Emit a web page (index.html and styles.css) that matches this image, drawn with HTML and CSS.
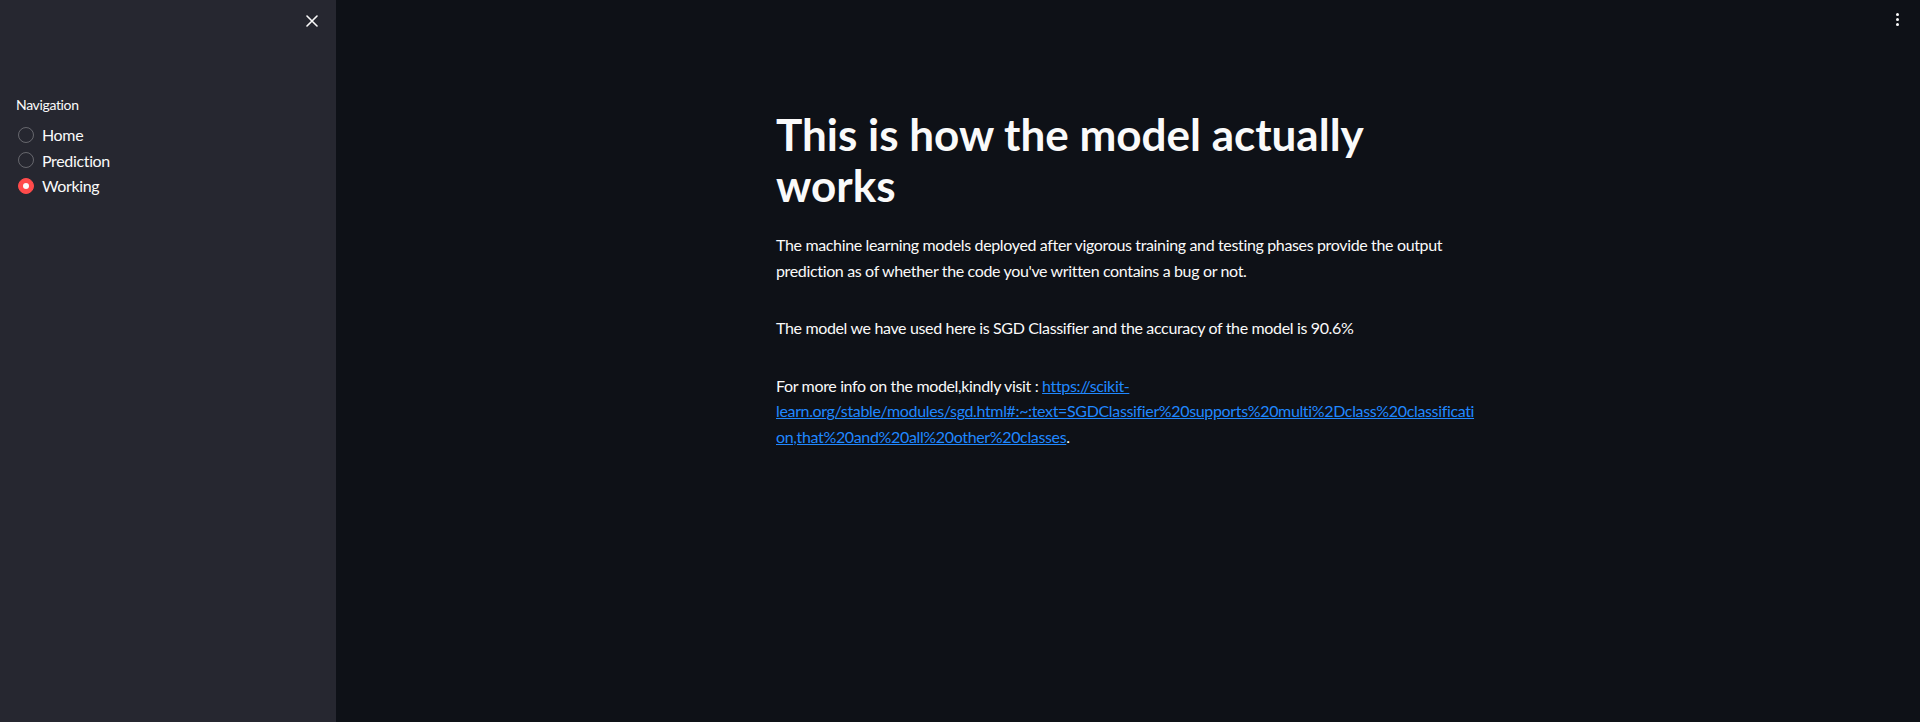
FILE: index.html
```html
<!DOCTYPE html>
<html lang="en">
<head>
<meta charset="utf-8">
<title>Working</title>
<link rel="stylesheet" href="styles.css">
</head>
<body>
<div class="app">
  <aside class="sidebar">
    <div class="sidebar-top">
      <button class="close-btn" aria-label="Close sidebar">
        <svg width="12" height="12" viewBox="0 0 12 12"><path d="M1 1 L11 11 M11 1 L1 11" stroke="#fafafa" stroke-width="1.6" stroke-linecap="round"/></svg>
      </button>
    </div>
    <div class="nav">
      <div class="nav-label">Navigation</div>
      <div class="radio-group">
        <label class="radio"><span class="circle"></span><span class="radio-text">Home</span></label>
        <label class="radio"><span class="circle"></span><span class="radio-text">Prediction</span></label>
        <label class="radio checked"><span class="circle"></span><span class="radio-text">Working</span></label>
      </div>
    </div>
  </aside>
  <main class="main">
    <div class="toolbar">
      <div class="kebab"><span></span><span></span><span></span></div>
    </div>
    <div class="content">
      <h1 class="title">This is how the model actually works</h1>
      <p class="para">The machine learning models deployed after vigorous training and testing phases provide the output prediction as of whether the code you've written contains a bug or not.</p>
      <p class="para">The model we have used here is SGD Classifier and the accuracy of the model is 90.6%</p>
      <p class="para">For more info on the model,kindly visit : <a class="link" href="#">https://scikit-learn.org/stable/modules/sgd.html#:~:text=SGDClassifier%20supports%20multi%2Dclass%20classification,that%20and%20all%20other%20classes</a>.</p>
    </div>
  </main>
</div>
</body>
</html>
```
FILE: styles.css
```css
* { box-sizing: border-box; }
html, body {
  margin: 0;
  padding: 0;
  height: 100%;
}
body {
  background: #0e1117;
  color: #fafafa;
  font-family: Lato, "Liberation Sans", sans-serif;
  letter-spacing: -0.35px;
  overflow: hidden;
}
.app {
  display: flex;
  height: 100vh;
}
.sidebar {
  width: 336px;
  flex: 0 0 336px;
  background: #262730;
  padding: 0 16px;
}
.sidebar-top {
  display: flex;
  justify-content: flex-end;
  padding-top: 15px;
  padding-right: 2px;
  height: 94px;
}
.close-btn {
  background: none;
  border: none;
  padding: 0;
  width: 12px;
  height: 12px;
  display: flex;
  cursor: pointer;
}
.nav-label {
  font-size: 14px;
  line-height: 22px;
  margin-bottom: 6px;
}
.radio-group {
  display: flex;
  flex-direction: column;
}
.radio {
  display: flex;
  align-items: center;
  height: 25.6px;
  font-size: 16px;
}
.circle {
  width: 16px;
  height: 16px;
  border-radius: 50%;
  border: 1px solid rgba(250, 250, 250, 0.3);
  margin: 0 8px 0 2px;
  display: flex;
  align-items: center;
  justify-content: center;
}
.radio.checked .circle {
  background: #ff4b4b;
  border-color: #ff4b4b;
}
.radio.checked .circle::after {
  content: "";
  width: 6px;
  height: 6px;
  border-radius: 50%;
  background: #fafafa;
}
.main {
  flex: 1;
  display: flex;
  flex-direction: column;
  min-width: 0;
}
.toolbar {
  display: flex;
  justify-content: flex-end;
  padding: 13px 21px 0 0;
  height: 40px;
}
.kebab {
  display: flex;
  flex-direction: column;
  gap: 2px;
}
.kebab span {
  width: 3px;
  height: 3px;
  border-radius: 50%;
  background: #fafafa;
}
.content {
  width: 100%;
  max-width: 736px;
  margin: 0 auto;
  padding: 69px 16px 0;
}
.title {
  font-size: 44px;
  font-weight: 700;
  line-height: 51px;
  letter-spacing: 0;
  margin: 0 0 21px;
}
.para {
  font-size: 16px;
  line-height: 25.6px;
  margin: 0 0 32px;
}
.link {
  color: #2088ff;
  text-decoration: underline;
  overflow-wrap: anywhere;
}
```
